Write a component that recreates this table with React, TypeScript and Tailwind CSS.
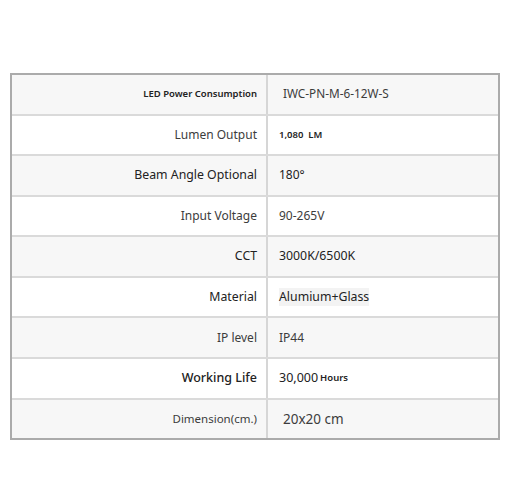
const rows: {
  label: string;
  labelClass: string;
  value: React.ReactNode;
  valueClass: string;
}[] = [
  {
    label: "LED Power Consumption",
    labelClass: "text-[9.5px] font-semibold text-[#222]",
    value: "IWC-PN-M-6-12W-S",
    valueClass: "text-[11.8px] pl-[15px]",
  },
  {
    label: "Lumen Output",
    labelClass: "text-[12px]",
    value: <>1,080&nbsp;&nbsp;LM</>,
    valueClass: "text-[9.5px] font-semibold text-[#222] pl-[8px]",
  },
  {
    label: "Beam Angle Optional",
    labelClass: "text-[12.3px] text-[#222]",
    value: "180°",
    valueClass: "text-[12px] text-[#222]",
  },
  {
    label: "Input Voltage",
    labelClass: "text-[12px]",
    value: "90-265V",
    valueClass: "text-[12px]",
  },
  {
    label: "CCT",
    labelClass: "text-[12.3px] text-[#222]",
    value: "3000K/6500K",
    valueClass: "text-[12.3px] text-[#222]",
  },
  {
    label: "Material",
    labelClass: "text-[12.3px] text-[#222]",
    value: <span className="bg-[#f3f3f3]">Alumium+Glass</span>,
    valueClass: "text-[12.3px] text-[#222]",
  },
  {
    label: "IP level",
    labelClass: "text-[12px]",
    value: "IP44",
    valueClass: "text-[12px]",
  },
  {
    label: "Working Life",
    labelClass: "text-[12.5px] font-medium text-[#222]",
    value: (
      <>
        30,000{" "}<span className="text-[9.5px] font-semibold ml-[2px]">Hours</span>
      </>
    ),
    valueClass: "text-[12.5px] text-[#222]",
  },
  {
    label: "Dimension(cm.)",
    labelClass: "text-[11.5px]",
    value: "20x20 cm",
    valueClass: "text-[13.5px] pl-[15px] text-[#1a1a1a]",
  },
];

export default function App() {
  return (
    <div
      className="w-[510px] h-[490px] bg-white pt-[73px] pl-[10px]"
      style={{ fontFamily: '"Noto Sans", "DejaVu Sans", sans-serif' }}
    >
      <div className="w-[490px] h-[367px] border-2 border-[#ababab] flex flex-col">
        {rows.map((row, i) => (
          <div
            key={row.label}
            className={`flex-1 flex ${i % 2 === 0 ? "bg-[#f7f7f7]" : "bg-white"} ${
              i < rows.length - 1 ? "border-b-2 border-[#dadada]" : ""
            }`}
          >
            <div
              className={`w-[256px] border-r-2 border-[#d6d6d6] flex items-center justify-end pr-[9px] text-[#3c3c3c] ${row.labelClass}`}
            >
              {row.label}
            </div>
            <div
              className={`flex-1 flex items-center pl-[11px] text-[#3c3c3c] ${row.valueClass}`}
            >
              {row.value}
            </div>
          </div>
        ))}
      </div>
    </div>
  );
}
